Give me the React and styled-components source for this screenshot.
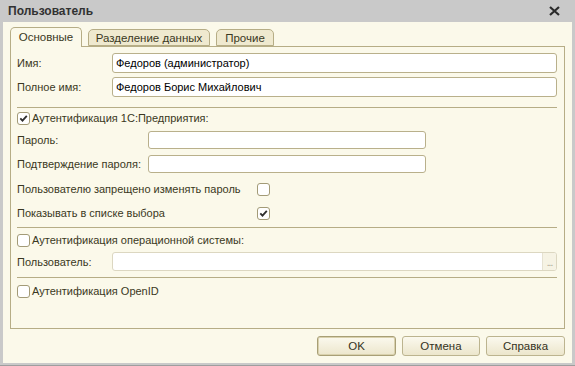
import React from 'react';
import styled, { createGlobalStyle } from 'styled-components';

const Global = createGlobalStyle`
  html, body { margin: 0; padding: 0; }
  body { font-family: "Liberation Sans", Arial, sans-serif; font-size: 11px; }
`;

const Frame = styled.div`
  width: 575px;
  height: 366px;
  background: #c9c9c9;
  display: flex;
  flex-direction: column;
  box-sizing: border-box;
  border-bottom: 1px solid #9e9e9e;
`;

const TitleBar = styled.div`
  height: 22px;
  flex: none;
  display: flex;
  align-items: center;
  justify-content: space-between;
  padding: 0 15px 0 8px;
  color: #323232;
  font-weight: bold;
  font-size: 12px;
`;

const Body = styled.div`
  flex: 1;
  margin: 0 3px 2px 3px;
  background: #fbf9ea;
  padding: 5px 7px 7px 7px;
  display: flex;
  flex-direction: column;
  min-height: 0;
`;

const TabStrip = styled.div`
  display: flex;
  align-items: flex-end;
  gap: 6px;
  height: 19px;
  flex: none;
`;

const Tab = styled.div`
  box-sizing: border-box;
  width: ${p => p.$w}px;
  height: ${p => (p.$active ? 20 : 17)}px;
  margin-bottom: ${p => (p.$active ? -1 : 0)}px;
  position: relative;
  z-index: ${p => (p.$active ? 2 : 1)};
  border: 1px solid #b6ad86;
  border-bottom: ${p => (p.$active ? 'none' : '1px solid #b6ad86')};
  border-radius: 5px 5px 0 0;
  background: ${p => (p.$active ? '#fbf9ea' : '#efe9cf')};
  color: #3a3822;
  font-size: 11.5px;
  display: flex;
  align-items: center;
  justify-content: center;
  padding-bottom: ${p => (p.$active ? 1 : 0)}px;
`;

const Panel = styled.div`
  flex: 1;
  border: 1px solid #b6ad86;
  padding: 6px 7px 0 6px;
  display: flex;
  flex-direction: column;
  min-height: 0;
`;

const Row = styled.div`
  display: flex;
  align-items: center;
  height: ${p => p.$h || 20}px;
  margin-top: ${p => p.$mt || 0}px;
  flex: none;
`;

const Label = styled.div`
  width: ${p => p.$w}px;
  flex: none;
  color: #3a3822;
  white-space: nowrap;
`;

const Input = styled.div`
  box-sizing: border-box;
  flex: ${p => (p.$w ? 'none' : 1)};
  width: ${p => (p.$w ? `${p.$w}px` : 'auto')};
  height: 100%;
  background: #fff;
  border: 1px solid ${p => (p.$disabled ? '#dcd7c1' : '#b9b08b')};
  border-radius: 3px;
  display: flex;
  align-items: center;
  padding-left: 3px;
  color: #000;
  font-size: 11px;
  overflow: hidden;
`;

const InputText = styled.span`
  flex: 1;
`;

const DotsButton = styled.div`
  width: 14px;
  height: 100%;
  border-left: 1px solid #e6e2d2;
  background: #f6f3e4;
  color: #a8a490;
  font-size: 10px;
  display: flex;
  align-items: flex-end;
  justify-content: center;
  padding-bottom: 2px;
  box-sizing: border-box;
  letter-spacing: -1px;
`;

const Separator = styled.div`
  height: 1px;
  background: #b6ad86;
  margin-top: ${p => p.$mt}px;
  flex: none;
`;

const Box = styled.div`
  box-sizing: border-box;
  width: 13px;
  height: 13px;
  flex: none;
  border: 1px solid #a39b77;
  border-radius: 3px;
  background: #fff;
  display: flex;
  align-items: center;
  justify-content: center;
  margin-right: 2px;
`;

const CheckText = styled.span`
  color: #3a3822;
  white-space: nowrap;
`;

const Footer = styled.div`
  flex: none;
  display: flex;
  justify-content: flex-end;
  gap: 6px;
  margin-top: 7px;
  height: 20px;
`;

const Button = styled.div`
  box-sizing: border-box;
  width: ${p => p.$w}px;
  height: 20px;
  border: 1px solid ${p => (p.$default ? '#a89f76' : '#bcb48f')};
  border-radius: 3px;
  background: linear-gradient(#fbf9ee, #ece6cc);
  box-shadow: inset 0 0 0 1px ${p => (p.$default ? '#d9d1ad' : 'transparent')};
  color: #343222;
  font-size: 11.5px;
  display: flex;
  align-items: center;
  justify-content: center;
`;

const Check = ({ checked }) => (
  <Box>
    {checked && (
      <svg width="9" height="9" viewBox="0 0 9 9">
        <path d="M1.3 4.3 L3.5 6.6 L7.8 1.8" fill="none" stroke="#2e2e2e" strokeWidth="1.8" />
      </svg>
    )}
  </Box>
);

const CloseIcon = () => (
  <svg width="11" height="10" viewBox="0 0 11 10">
    <path d="M1 1 L10 9 M10 1 L1 9" stroke="#2b2b2b" strokeWidth="2.2" />
  </svg>
);

export default function App() {
  return (
    <>
      <Global />
      <Frame>
        <TitleBar>
          <span>Пользователь</span>
          <CloseIcon />
        </TitleBar>
        <Body>
          <TabStrip>
            <Tab $active $w={72}>Основные</Tab>
            <Tab $w={122}>Разделение данных</Tab>
            <Tab $w={58}>Прочие</Tab>
          </TabStrip>
          <Panel>
            <Row $h={20}>
              <Label $w={95}>Имя:</Label>
              <Input><InputText>Федоров (администратор)</InputText></Input>
            </Row>
            <Row $h={20} $mt={4}>
              <Label $w={95}>Полное имя:</Label>
              <Input><InputText>Федоров Борис Михайлович</InputText></Input>
            </Row>
            <Separator $mt={10} />
            <Row>
              <Check checked />
              <CheckText>Аутентификация 1С:Предприятия:</CheckText>
            </Row>
            <Row $h={18} $mt={3}>
              <Label $w={131}>Пароль:</Label>
              <Input $w={278} />
            </Row>
            <Row $h={18} $mt={6}>
              <Label $w={131}>Подтверждение пароля:</Label>
              <Input $w={278} />
            </Row>
            <Row $mt={6}>
              <Label $w={240}>Пользователю запрещено изменять пароль</Label>
              <Check />
            </Row>
            <Row $mt={4}>
              <Label $w={240}>Показывать в списке выбора</Label>
              <Check checked />
            </Row>
            <Separator $mt={4} />
            <Row $mt={2}>
              <Check />
              <CheckText>Аутентификация операционной системы:</CheckText>
            </Row>
            <Row $h={19} $mt={2}>
              <Label $w={95}>Пользователь:</Label>
              <Input $disabled>
                <InputText />
                <DotsButton>...</DotsButton>
              </Input>
            </Row>
            <Separator $mt={6} />
            <Row $mt={3}>
              <Check />
              <CheckText>Аутентификация OpenID</CheckText>
            </Row>
          </Panel>
          <Footer>
            <Button $w={79} $default>OK</Button>
            <Button $w={78}>Отмена</Button>
            <Button $w={79}>Справка</Button>
          </Footer>
        </Body>
      </Frame>
    </>
  );
}
